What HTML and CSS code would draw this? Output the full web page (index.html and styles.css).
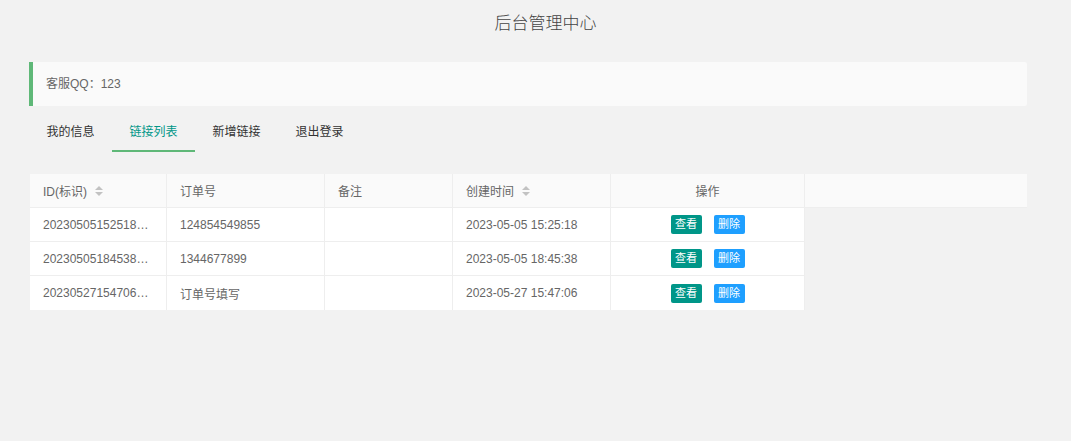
FILE: index.html
```html
<!DOCTYPE html>
<html lang="zh-CN">
<head>
<meta charset="UTF-8">
<title>后台管理中心</title>
<link rel="stylesheet" href="styles.css">
</head>
<body>

<div class="header">后台管理中心</div>

<div class="main">
    <!-- 客服 -->
    <div class="quote">客服QQ：123</div>

    <!-- 选项卡 -->
    <ul class="tab-title">
        <li>我的信息</li>
        <li class="this">链接列表</li>
        <li>新增链接</li>
        <li>退出登录</li>
    </ul>

    <!-- 链接列表 -->
    <div class="table-box">
        <div class="table-head">
            <div class="cell col-id">ID(标识) <span class="sort"></span></div>
            <div class="cell col-order">订单号</div>
            <div class="cell col-note">备注</div>
            <div class="cell col-time">创建时间 <span class="sort"></span></div>
            <div class="cell col-op center">操作</div>
            <div class="cell col-fill"></div>
        </div>
        <div class="table-body">
            <div class="row">
                <div class="cell col-id">20230505152518…</div>
                <div class="cell col-order">124854549855</div>
                <div class="cell col-note"></div>
                <div class="cell col-time">2023-05-05 15:25:18</div>
                <div class="cell col-op center"><span class="btn btn-view">查看</span><span class="btn btn-del">删除</span></div>
            </div>
            <div class="row">
                <div class="cell col-id">20230505184538…</div>
                <div class="cell col-order">1344677899</div>
                <div class="cell col-note"></div>
                <div class="cell col-time">2023-05-05 18:45:38</div>
                <div class="cell col-op center"><span class="btn btn-view">查看</span><span class="btn btn-del">删除</span></div>
            </div>
            <div class="row">
                <div class="cell col-id">20230527154706…</div>
                <div class="cell col-order">订单号填写</div>
                <div class="cell col-note"></div>
                <div class="cell col-time">2023-05-27 15:47:06</div>
                <div class="cell col-op center"><span class="btn btn-view">查看</span><span class="btn btn-del">删除</span></div>
            </div>
        </div>
    </div>
</div>

</body>
</html>
```

FILE: styles.css
```css
body {
    margin: 0;
    background: #f2f2f2;
    font-family: 'Liberation Sans', 'Noto Sans CJK SC', sans-serif;
    font-size: 12px;
    color: #666;
}

.header {
    height: 48px;
    line-height: 48px;
    padding-left: 20px;
    text-align: center;
    font-size: 17px;
    font-weight: 300;
    color: #444;
}

.main {
    padding: 0 44px 0 29px;
}

/* 客服 */
.quote {
    margin-top: 14px;
    height: 44px;
    line-height: 44px;
    padding-left: 13px;
    border-left: 4px solid #5fb878;
    border-radius: 0 2px 2px 0;
    background: #fafafa;
    font-size: 12px;
}

/* 选项卡 */
.tab-title {
    list-style: none;
    margin: 6px 0 0 0;
    padding: 0;
    display: flex;
    height: 40px;
}
.tab-title li {
    width: 83px;
    text-align: center;
    line-height: 40px;
    font-size: 12px;
    color: #333;
    box-sizing: border-box;
}
.tab-title li.this {
    color: #009688;
    border-bottom: 2px solid #5fb878;
}

/* 表格 */
.table-box {
    margin-top: 22px;
    margin-left: 1px;
}
.table-head {
    display: flex;
    background: #fafafa;
    height: 34px;
    border-bottom: 1px solid #eee;
    box-sizing: border-box;
}
.table-body {
    display: flex;
    flex-direction: column;
}
.row {
    display: flex;
    height: 34px;
    background: #fff;
    width: 775px;
    border-bottom: 1px solid #eee;
    box-sizing: border-box;
}
.row:last-child {
    border-bottom: none;
}
.cell {
    display: flex;
    align-items: center;
    padding: 0 13px;
    box-sizing: border-box;
    border-right: 1px solid #eee;
    white-space: nowrap;
    overflow: hidden;
    color: #666;
}
.center {
    justify-content: center;
}
.col-id { width: 137px; }
.col-order { width: 158px; }
.col-note { width: 128px; }
.col-time { width: 158px; }
.col-op { width: 194px; }
.col-fill { flex: 1; border-right: none; }

.sort {
    display: inline-block;
    position: relative;
    width: 8px;
    height: 10px;
    margin-left: 8px;
}
.sort::before,
.sort::after {
    content: '';
    position: absolute;
    left: 0;
    border-left: 4px solid transparent;
    border-right: 4px solid transparent;
}
.sort::before {
    top: 0;
    border-bottom: 4px solid #c2c2c2;
}
.sort::after {
    bottom: 0;
    border-top: 4px solid #c2c2c2;
}

.btn {
    display: inline-block;
    width: 31px;
    height: 19px;
    line-height: 19px;
    text-align: center;
    font-size: 11px;
    color: #fff;
    border-radius: 2px;
}
.btn + .btn {
    margin-left: 12px;
}
.btn-view { background: #009688; }
.btn-del { background: #1e9fff; }
```
